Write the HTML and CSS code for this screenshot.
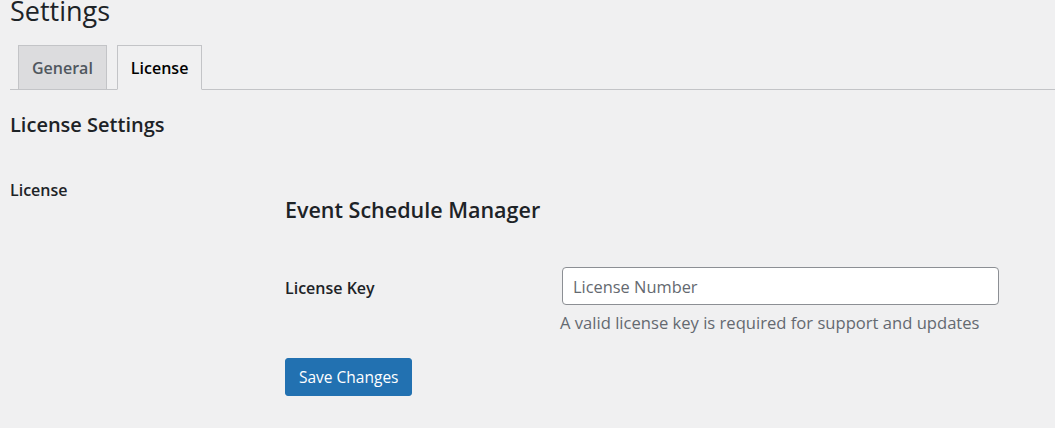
FILE: index.html
```html
<!DOCTYPE html>
<html>
<head>
<meta charset="utf-8">
<link rel="stylesheet" href="styles.css">
</head>
<body>
<div class="wrap">
  <h1 class="page-title">Settings</h1>
  <nav class="tabs">
    <a class="tab">General</a>
    <a class="tab active">License</a>
  </nav>
  <h2 class="section-title">License Settings</h2>
  <div class="row">
    <div class="row-label">License</div>
    <div class="row-body">
      <h3 class="product">Event Schedule Manager</h3>
      <div class="field">
        <label class="field-label">License Key</label>
        <div class="field-body">
          <input class="input" type="text" placeholder="License Number">
          <p class="desc">A valid license key is required for support and updates</p>
        </div>
      </div>
      <button class="btn">Save Changes</button>
    </div>
  </div>
</div>
</body>
</html>
```
FILE: styles.css
```css
html, body {
  margin: 0;
  padding: 0;
  background: #f0f0f1;
  color: #1d2327;
  font-family: "Open Sans", "Noto Sans", sans-serif;
}
.wrap {
  padding-left: 10px;
  overflow: hidden;
  height: 428px;
}
.page-title {
  margin: 0;
  font-size: 27px;
  font-weight: 400;
  line-height: 21px;
  color: #1d2327;
}
.tabs {
  display: flex;
  gap: 10px;
  margin-top: 24px;
  padding-left: 8px;
  border-bottom: 1px solid #c3c4c7;
  height: 44px;
}
.tab {
  box-sizing: border-box;
  height: 45px;
  padding: 0 13px;
  display: flex;
  align-items: center;
  border: 1px solid #c3c4c7;
  background: #dcdcde;
  color: #50575e;
  font-size: 16px;
  font-weight: 600;
}
.tab.active {
  background: #f0f0f1;
  color: #000;
  border-bottom-color: #f0f0f1;
}
.section-title {
  margin: 21px 0 0;
  font-size: 20px;
  font-weight: 600;
  line-height: 28px;
}
.row {
  display: flex;
  margin-top: 40px;
}
.row-label {
  width: 275px;
  font-size: 16px;
  font-weight: 600;
  line-height: 22px;
}
.product {
  margin: 16px 0 0;
  font-size: 21.5px;
  font-weight: 600;
  line-height: 30px;
}
.field {
  display: flex;
  margin-top: 42px;
}
.field-label {
  width: 277px;
  font-size: 16px;
  font-weight: 600;
  padding-top: 10px;
}
.input {
  box-sizing: border-box;
  width: 437px;
  height: 38px;
  border: 1px solid #8c8f94;
  border-radius: 4px;
  background: #fff;
  padding: 0 10px;
  font-family: inherit;
  font-size: 16.4px;
  color: #2c3338;
}
.input::placeholder {
  color: #646970;
}
.desc {
  margin: 6px 0 0 -2px;
  font-size: 16.6px;
  line-height: 24px;
  color: #646970;
}
.btn {
  margin-top: 23px;
  box-sizing: border-box;
  height: 38px;
  padding: 0 13px;
  border: 1px solid #2271b1;
  border-radius: 3px;
  background: #2271b1;
  color: #fff;
  font-family: inherit;
  font-size: 15.5px;
}
```
